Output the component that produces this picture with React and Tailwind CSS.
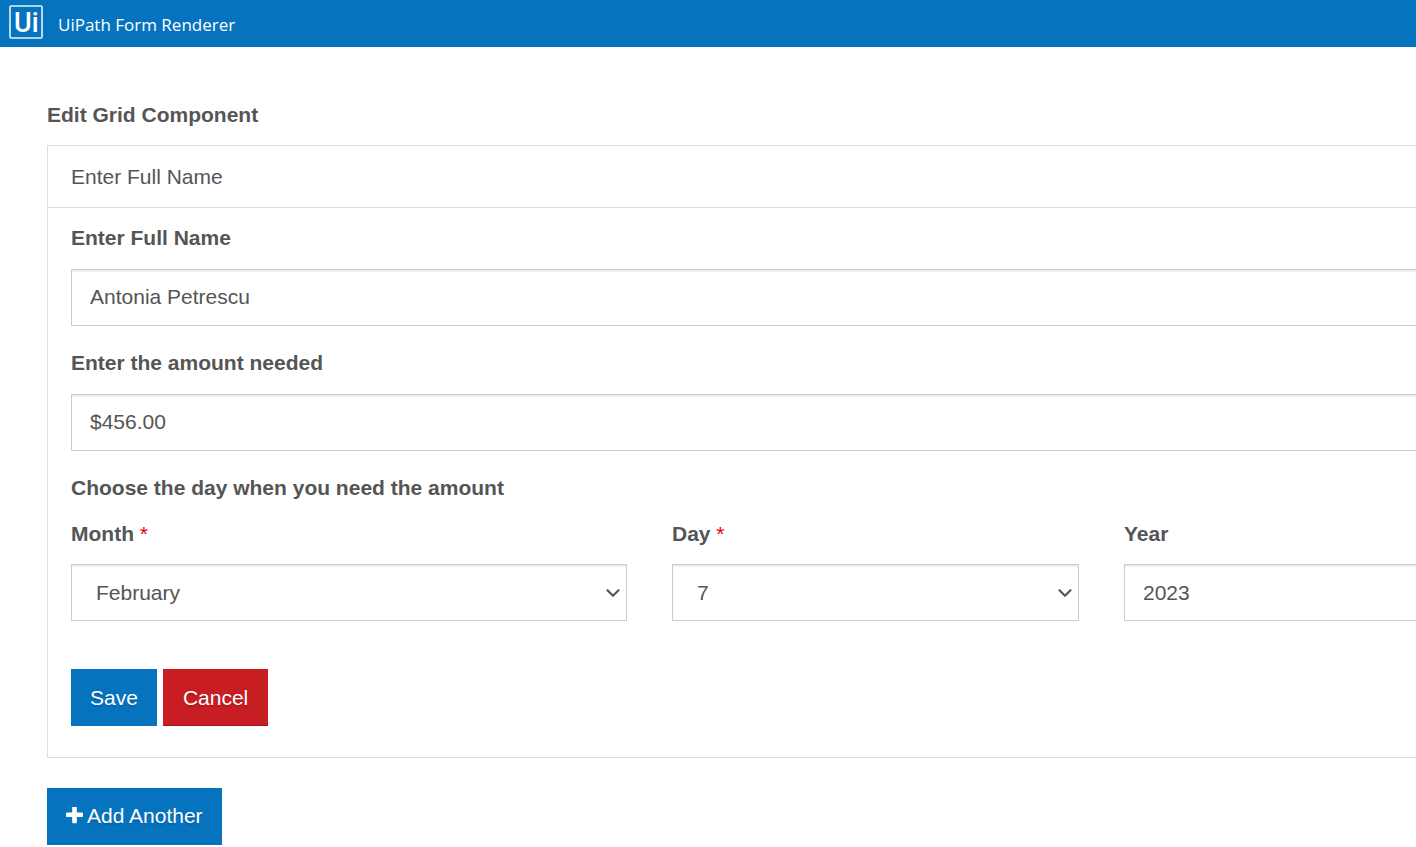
import { useState } from "react";
import { ChevronDown } from "lucide-react";

const MONTHS = [
  "January", "February", "March", "April", "May", "June",
  "July", "August", "September", "October", "November", "December",
];
const DAYS = Array.from({ length: 31 }, (_, i) => String(i + 1));

const CONTROL =
  "block w-full h-[57px] border border-[#ccc] bg-white text-[#555] shadow-[inset_0_2px_1px_rgba(0,0,0,0.07)] focus:outline-none focus:border-[#0673bf]";
const BUTTON =
  "h-[57px] text-white text-shadow-[0_2px_1px_rgba(0,0,0,0.15)] cursor-pointer";

function Logo() {
  return (
    <svg className="w-[34px] h-[34px] shrink-0" viewBox="0 0 34 34" aria-label="UiPath">
      <rect x="1" y="1" width="32" height="32" rx="1" fill="none" stroke="#e6f1f9" strokeWidth="1.6" />
      <text x="5" y="27" fill="white" className="font-[Roboto,'Liberation_Sans',sans-serif] text-[27px] font-medium">
        Ui
      </text>
    </svg>
  );
}

function PlusIcon() {
  return (
    <svg className="w-[17px] h-[17px]" viewBox="192 192 1408 1408" fill="currentColor" aria-hidden="true">
      <path d="M1600 736v192q0 40-28 68t-68 28h-416v416q0 40-28 68t-68 28h-192q-40 0-68-28t-28-68v-416h-416q-40 0-68-28t-28-68v-192q0-40 28-68t68-28h416v-416q0-40 28-68t68-28h192q40 0 68 28t28 68v416h416q40 0 68 28t28 68z" />
    </svg>
  );
}

function Label({ htmlFor, required, children }) {
  return (
    <label htmlFor={htmlFor} className="block font-bold">
      {children}
      {required && <span className="font-normal text-[#eb0000]"> *</span>}
    </label>
  );
}

function TextField({ id, label, value, onChange }) {
  return (
    <div className="flex flex-col gap-4">
      <Label htmlFor={id}>{label}</Label>
      <input
        id={id}
        type="text"
        value={value}
        onChange={(e) => onChange(e.target.value)}
        className={`${CONTROL} border-r-0 pl-[18px] pb-[2px]`}
      />
    </div>
  );
}

function SelectField({ id, label, options, value, onChange }) {
  return (
    <div className="flex flex-col gap-[15px]">
      <Label htmlFor={id} required>{label}</Label>
      <div className="relative">
        <select
          id={id}
          value={value}
          onChange={(e) => onChange(e.target.value)}
          className={`${CONTROL} appearance-none pl-6 pr-8`}
        >
          {options.map((option) => (
            <option key={option}>{option}</option>
          ))}
        </select>
        <ChevronDown
          className="absolute right-[3px] inset-y-0 my-auto w-[22px] h-[22px] text-[#555] pointer-events-none"
          strokeWidth={2.4}
        />
      </div>
    </div>
  );
}

export default function App() {
  const [name, setName] = useState("Antonia Petrescu");
  const [amount, setAmount] = useState("$456.00");
  const [month, setMonth] = useState("February");
  const [day, setDay] = useState("7");
  const [year, setYear] = useState("2023");

  return (
    <div className="min-h-screen bg-white font-['Liberation_Sans',Arial,sans-serif] text-[21px] leading-[30px] text-[#555]">
      <header className="flex items-center gap-[15px] h-[47px] pl-[9px] pb-[3px] bg-[#0673bf]">
        <Logo />
        <h1 className="pt-[6px] font-['Open_Sans','Noto_Sans',sans-serif] text-[17px] leading-6 text-white">
          UiPath Form Renderer
        </h1>
      </header>

      <main className="pl-[47px] pt-[53px]">
        <h2 className="font-bold mb-[15px]">Edit Grid Component</h2>

        <section className="border border-r-0 border-[#ddd]">
          <div className="h-[62px] flex items-center pl-[23px] border-b border-[#ddd]">Enter Full Name</div>

          <form className="pl-[23px] pt-[15px] pb-[31px]" onSubmit={(e) => e.preventDefault()}>
            <div className="flex flex-col gap-[22px]">
              <TextField id="full-name" label="Enter Full Name" value={name} onChange={setName} />
              <TextField id="amount" label="Enter the amount needed" value={amount} onChange={setAmount} />

              <fieldset>
                <legend className="font-bold mb-4">Choose the day when you need the amount</legend>
                <div className="grid grid-cols-[556fr_407fr_292fr] gap-x-[45px]">
                  <SelectField id="month" label="Month" options={MONTHS} value={month} onChange={setMonth} />
                  <SelectField id="day" label="Day" options={DAYS} value={day} onChange={setDay} />
                  <div className="flex flex-col gap-[15px]">
                    <Label htmlFor="year">Year</Label>
                    <input
                      id="year"
                      type="text"
                      value={year}
                      onChange={(e) => setYear(e.target.value)}
                      className={`${CONTROL} border-r-0 pl-[18px]`}
                    />
                  </div>
                </div>
              </fieldset>
            </div>

            <div className="flex gap-[6px] mt-12">
              <button type="submit" className={`${BUTTON} px-[19px] bg-[#0673bf]`}>Save</button>
              <button type="button" className={`${BUTTON} px-5 bg-[#c71d23] shadow-[inset_0_-1px_0_#9c161b]`}>
                Cancel
              </button>
            </div>
          </form>
        </section>

        <button type="button" className={`${BUTTON} mt-[30px] px-[19px] pb-[2px] flex items-center gap-1 bg-[#0673bf]`}>
          <PlusIcon />
          Add Another
        </button>
      </main>
    </div>
  );
}
